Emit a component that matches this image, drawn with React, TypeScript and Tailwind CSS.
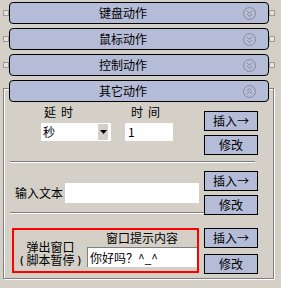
import React from 'react'

const barBg = 'bg-[#b4bcd7]'

function Chevrons({ open }: { open: boolean }) {
  return (
    <svg width="13" height="13" viewBox="0 0 13 13" fill="none" stroke="#8a8a98" strokeWidth="1">
      <circle cx="6.5" cy="6.5" r="6" />
      {open ? (
        <>
          <polyline points="4,6 6.5,3.5 9,6" />
          <polyline points="4,9 6.5,6.5 9,9" />
        </>
      ) : (
        <>
          <polyline points="4,4 6.5,6.5 9,4" />
          <polyline points="4,7 6.5,9.5 9,7" />
        </>
      )}
    </svg>
  )
}

function Connector({ hidden }: { hidden?: boolean }) {
  return <div className={`w-[6px] h-[6px] border border-[#9a9a9a] bg-[#e4e2dc] ${hidden ? 'invisible' : ''}`} />
}

function Bar({ label, open = false }: { label: string; open?: boolean }) {
  return (
    <div className="relative z-10 flex items-center pl-[3px] h-[22px]">
      <Connector hidden={open} />
      <div className={`w-[260px] h-[22px] flex items-center border border-black rounded-[4px] ${barBg}`}>
        <div className="flex-1 pr-[7px] text-center leading-[14px]">{label}</div>
        <div className="pr-[12px] flex items-center"><Chevrons open={open} /></div>
      </div>
      <Connector hidden={open} />
    </div>
  )
}

function Btn({ children }: { children: React.ReactNode }) {
  return (
    <div className={`relative z-10 w-[54px] h-[20px] border border-black ${barBg} text-center leading-[18px]`}>
      {children}
    </div>
  )
}

function Separator({ className = '' }: { className?: string }) {
  return <div className={`ml-[6px] w-[245px] h-[2px] border-t border-b border-t-[#808080] border-b-white ${className}`} />
}

export default function App() {
  return (
    <div className="w-[281px] h-[288px] overflow-hidden bg-[#d4d0c8] text-black text-[12px] font-['Noto_Sans_CJK_SC','Noto_Sans',sans-serif]">
      <div className="pt-[2px] flex flex-col gap-[4px]">
        <Bar label="键盘动作" />
        <Bar label="鼠标动作" />
        <Bar label="控制动作" />
        <Bar label="其它动作" open />
      </div>

      <div className="-mt-[14px] ml-[3px] w-[271px] h-[191px] border border-[#808080] shadow-[inset_1px_1px_0_#fff,1px_1px_0_#fff]">
        {/* delay */}
        <div className="flex">
          <div className="w-[200px]">
            <div className="mt-[16px] flex h-[14px] leading-[14px]">
              <div className="ml-[40px] flex gap-[5px]"><span>延</span><span>时</span></div>
              <div className="ml-[58px] flex gap-[5px]"><span>时</span><span>间</span></div>
            </div>
            <div className="mt-[4px] flex h-[18px]">
              <div className="ml-[37px] w-[70px] h-[18px] bg-white flex items-center">
                <span className="flex-1 pl-[2px] leading-[16px]">秒</span>
                <div className="mr-[3px] w-[10px] h-[16px] bg-[#d4d0c8] flex items-center justify-center">
                  <svg width="7" height="4" viewBox="0 0 7 4"><polygon points="0,0 7,0 3.5,4" fill="#000" /></svg>
                </div>
              </div>
              <div className="ml-[14px] w-[48px] h-[18px] bg-white pl-[3px] leading-[18px]">1</div>
            </div>
          </div>
          <div className="mt-[22px] flex flex-col gap-[4px]">
            <Btn>插入→</Btn>
            <Btn>修改</Btn>
          </div>
        </div>

        <Separator className="mt-[6px]" />

        {/* text input */}
        <div className="flex">
          <div className="w-[200px] mt-[20px] h-[20px] flex items-center">
            <span className="pl-[11px] leading-[20px]">输入文本</span>
            <div className="ml-[2px] w-[134px] h-[20px] bg-white" />
          </div>
          <div className="mt-[8px] flex flex-col gap-[4px]">
            <Btn>插入→</Btn>
            <Btn>修改</Btn>
          </div>
        </div>

        <Separator className="-mt-[3px]" />

        {/* popup */}
        <div className="flex">
          <div className="w-[200px]">
            <div className="ml-[8px] mt-[14px] w-[187px] h-[45px] border-2 border-[#ff0000] flex">
              <div className="w-[73px] pt-[10px] text-center leading-[13px]">
                <div className="h-[13px]">弹出窗口</div>
                <div className="h-[13px] flex justify-center items-center gap-[3px]">
                  <span className="text-[10px] font-bold leading-[10px]">(</span>
                  <span>脚本暂停</span>
                  <span className="text-[10px] font-bold leading-[10px]">)</span>
                </div>
              </div>
              <div className="flex-1 flex flex-col">
                <div className="pt-[1px] leading-[14px] text-center">窗口提示内容</div>
                <div className="mt-[2px] w-[110px] h-[20px] bg-white border-l border-t border-[#808080] pl-[2px] leading-[19px]">你好吗？^_^</div>
              </div>
            </div>
          </div>
          <div className="mt-[14px] flex flex-col gap-[6px]">
            <Btn>插入→</Btn>
            <Btn>修改</Btn>
          </div>
        </div>
      </div>
    </div>
  )
}
